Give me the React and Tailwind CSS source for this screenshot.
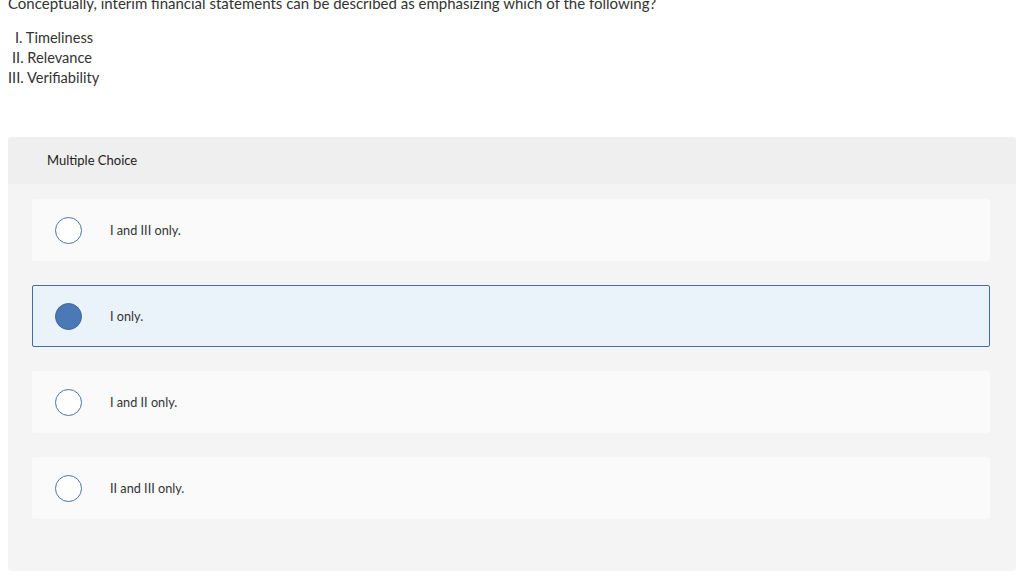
const options = [
  { id: 'a', label: 'I and III only.' },
  { id: 'b', label: 'I only.', selected: true },
  { id: 'c', label: 'I and II only.' },
  { id: 'd', label: 'II and III only.' },
];

const Radio = ({ checked }) =>
  checked ? (
    <span className="w-[27px] h-[27px] rounded-full bg-[#4a79b6] border border-[#3d66a0] shrink-0" />
  ) : (
    <span className="w-[27px] h-[27px] rounded-full bg-white border border-[#4a74a8] shrink-0" />
  );

export default function App() {
  return (
    <div className="w-[1024px] h-[585px] bg-white overflow-hidden text-[#333] font-['Lato','Open_Sans',sans-serif]">
      <p className="px-2 -mt-[7px] text-[15px] leading-[20px] text-[#333] whitespace-nowrap">
        Conceptually, interim financial statements can be described as emphasizing which of the following?
      </p>
      <div className="mt-[15px] text-[14.6px] leading-[20px]">
        <div className="pl-[15px]">I. Timeliness</div>
        <div className="pl-[12px]">II. Relevance</div>
        <div className="pl-[8px]">III. Verifiability</div>
      </div>

      <div className="mt-[49px] mx-2 h-[434px] rounded-[3px] bg-[#f4f4f4] overflow-hidden">
        <div className="h-[47px] bg-[#efefef] flex items-center pl-[39px] text-[13px] text-[#222]">
          Multiple Choice
        </div>
        <div className="pt-[15px] px-[24px] pr-[26px] flex flex-col gap-[24px]">
          {options.map((o) =>
            o.selected ? (
              <div
                key={o.id}
                className="h-[62px] rounded-[2px] bg-[#eaf2fa] border border-[#3f6eaa] flex items-center pl-[22px] gap-[28px]"
              >
                <Radio checked />
                <span className="pt-[2px] text-[12.7px] text-[#333]">{o.label}</span>
              </div>
            ) : (
              <div
                key={o.id}
                className="h-[62px] rounded-[3px] bg-[#fafafa] flex items-center pl-[23px] gap-[28px]"
              >
                <Radio />
                <span className="pt-[2px] text-[12.7px] text-[#333]">{o.label}</span>
              </div>
            )
          )}
        </div>
      </div>
    </div>
  );
}
